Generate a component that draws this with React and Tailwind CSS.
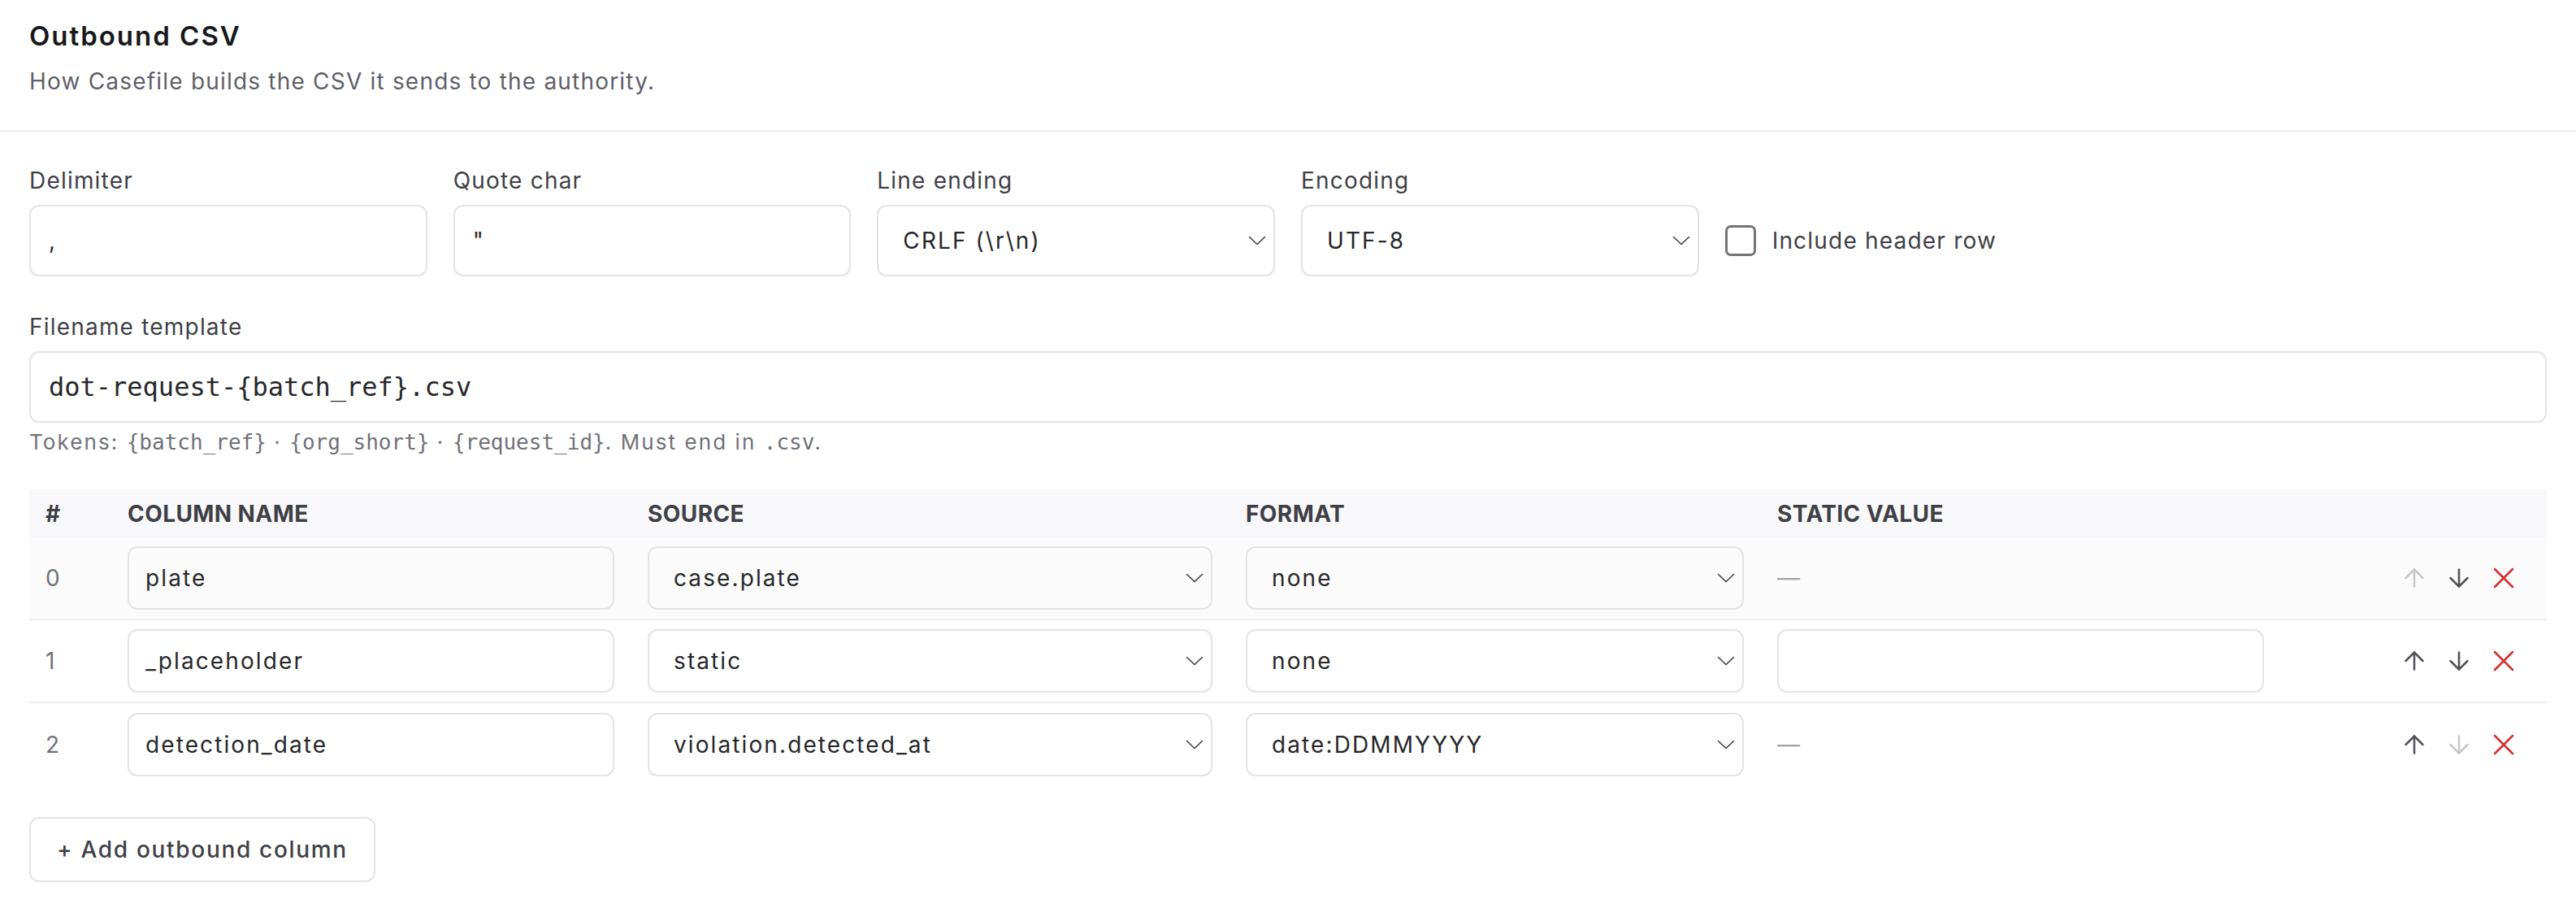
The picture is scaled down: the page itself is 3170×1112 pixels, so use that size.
import { ArrowUp, ArrowDown, X } from "lucide-react"

const rows = [
  { idx: 0, name: "plate", source: "case.plate", format: "none", staticInput: false, upOff: true, downOff: false },
  { idx: 1, name: "_placeholder", source: "static", format: "none", staticInput: true, upOff: false, downOff: false },
  { idx: 2, name: "detection_date", source: "violation.detected_at", format: "date:DDMMYYYY", staticInput: false, upOff: false, downOff: true },
]

const mono = "font-['DejaVu_Sans_Mono',monospace] tracking-normal"

function Chevron() {
  return (
    <svg
      className="pointer-events-none absolute right-[11px] top-1/2 -translate-y-1/2"
      width="22"
      height="12"
      viewBox="0 0 22 12"
      fill="none"
    >
      <polyline points="1.5,1.5 11,10.5 20.5,1.5" stroke="#3f3f46" strokeWidth="1.6" strokeLinejoin="round" strokeLinecap="round" />
    </svg>
  )
}

function Select({ value, height = "h-[88px]" }) {
  return (
    <div className="relative w-full">
      <select
        defaultValue={value}
        className={`${height} w-full appearance-none rounded-[12px] border-2 border-[#e4e4e7] bg-transparent pl-[30px] pr-[40px] text-[28px] tracking-[0.075em] text-[#27272a] outline-none`}
      >
        <option>{value}</option>
      </select>
      <Chevron />
    </div>
  )
}

function Field({ label, children }) {
  return (
    <div className="flex flex-col">
      <label className="mb-[10px] text-[28px] leading-[40px] text-[#3f3f46]">{label}</label>
      {children}
    </div>
  )
}

const textInput =
  "h-[88px] w-full rounded-[12px] border-2 border-[#e4e4e7] bg-white px-[22px] text-[28px] tracking-[0.075em] text-[#27272a] outline-none"

export default function App() {
  return (
    <div className="min-h-[1112px] w-full bg-white font-[Inter,sans-serif] tracking-[0.075em]">
      {/* Header */}
      <div className="border-b-2 border-[#efeff1] px-[36px] pt-[20px] pb-[40px]">
        <h2 className="text-[33px] leading-[48px] font-semibold tracking-[0.06em] text-[#18181b]">Outbound CSV</h2>
        <p className="mt-[12px] text-[28px] leading-[40px] text-[#5f5f6a]">
          How Casefile builds the CSV it sends to the authority.
        </p>
      </div>

      <div className="px-[36px] pt-[40px]">
        {/* Options */}
        <div className="grid grid-cols-6 gap-x-[32px]">
          <Field label="Delimiter">
            <input className={textInput} defaultValue="," readOnly />
          </Field>
          <Field label="Quote char">
            <input className={textInput} defaultValue={'"'} readOnly />
          </Field>
          <Field label="Line ending">
            <Select value="CRLF (\r\n)" />
          </Field>
          <Field label="Encoding">
            <Select value="UTF-8" />
          </Field>
          <div className="flex h-[88px] items-center gap-[20px] self-end">
            <span className="h-[38px] w-[38px] shrink-0 rounded-[7px] border-[3px] border-[#737378] bg-white" />
            <span className="text-[28px] leading-[40px] text-[#3f3f46]">Include header row</span>
          </div>
        </div>

        {/* Filename */}
        <div className="mt-[42px]">
          <Field label="Filename template">
            <input
              className={`${textInput} ${mono} text-[32px]`}
              defaultValue="dot-request-{batch_ref}.csv"
              readOnly
            />
          </Field>
          <p className="mt-[6px] text-[26px] leading-[36px] tracking-[0.08em] text-[#71717a]">
            Tokens: <code className={`${mono} text-[26px]`}>{"{batch_ref}"}</code> ·{" "}
            <code className={`${mono} text-[26px]`}>{"{org_short}"}</code> ·{" "}
            <code className={`${mono} text-[26px]`}>{"{request_id}"}</code>. Must end in{" "}
            <code className={`${mono} text-[26px]`}>.csv</code>.
          </p>
        </div>

        {/* Columns table */}
        <div className="mt-[40px]">
          <div className="grid h-[59px] grid-cols-[101px_640px_736px_654px_1fr_191px] items-center bg-[#f8f8fa] text-[28px] font-bold uppercase tracking-[0.015em] text-[#3f3f46]">
            <div className="pl-[20px]">#</div>
            <div className="pl-[20px]">Column name</div>
            <div className="pl-[20px]">Source</div>
            <div className="pl-[20px]">Format</div>
            <div className="pl-[20px]">Static value</div>
            <div />
          </div>

          {rows.map((r, i) => (
            <div
              key={r.idx}
              className={`grid h-[102px] grid-cols-[101px_640px_736px_654px_1fr_191px] items-center ${
                i < rows.length - 1 ? "border-b-2 border-[#efeff1]" : ""
              } ${i === 0 ? "bg-[#fbfbfc]" : "bg-white"}`}
            >
              <div className="pl-[20px] text-[28px] text-[#71717a]">{r.idx}</div>
              <div className="pl-[20px] pr-[21px]">
                <input
                  className="h-[78px] w-full rounded-[12px] border-2 border-[#e4e4e7] bg-transparent px-[20px] text-[28px] tracking-[0.075em] text-[#27272a] outline-none"
                  defaultValue={r.name}
                  readOnly
                />
              </div>
              <div className="pl-[20px] pr-[21px]">
                <Select value={r.source} height="h-[78px]" />
              </div>
              <div className="pl-[20px] pr-[21px]">
                <Select value={r.format} height="h-[78px]" />
              </div>
              <div className="pl-[20px]">
                {r.staticInput ? (
                  <input
                    className="h-[78px] w-[599px] rounded-[12px] border-2 border-[#e4e4e7] bg-white px-[20px] text-[28px] text-[#27272a] outline-none"
                    readOnly
                  />
                ) : (
                  <span className="text-[28px] text-[#a1a1aa]">—</span>
                )}
              </div>
              <div className="flex items-center pr-[26px]">
                <button className="flex w-[55px] justify-center">
                  <ArrowUp size={36} strokeWidth={1.7} className={r.upOff ? "text-[#c8c8cc]" : "text-[#52525b]"} />
                </button>
                <button className="flex w-[55px] justify-center">
                  <ArrowDown size={36} strokeWidth={1.7} className={r.downOff ? "text-[#c8c8cc]" : "text-[#52525b]"} />
                </button>
                <button className="flex w-[55px] justify-center">
                  <X size={44} strokeWidth={1.4} className="text-[#d32f2f]" />
                </button>
              </div>
            </div>
          ))}
        </div>

        <button className="mt-[38px] h-[80px] rounded-[12px] border-2 border-[#e4e4e7] bg-white px-[32px] text-[28px] font-medium tracking-[0.06em] text-[#3f3f46]">
          + Add outbound column
        </button>
      </div>
    </div>
  )
}
